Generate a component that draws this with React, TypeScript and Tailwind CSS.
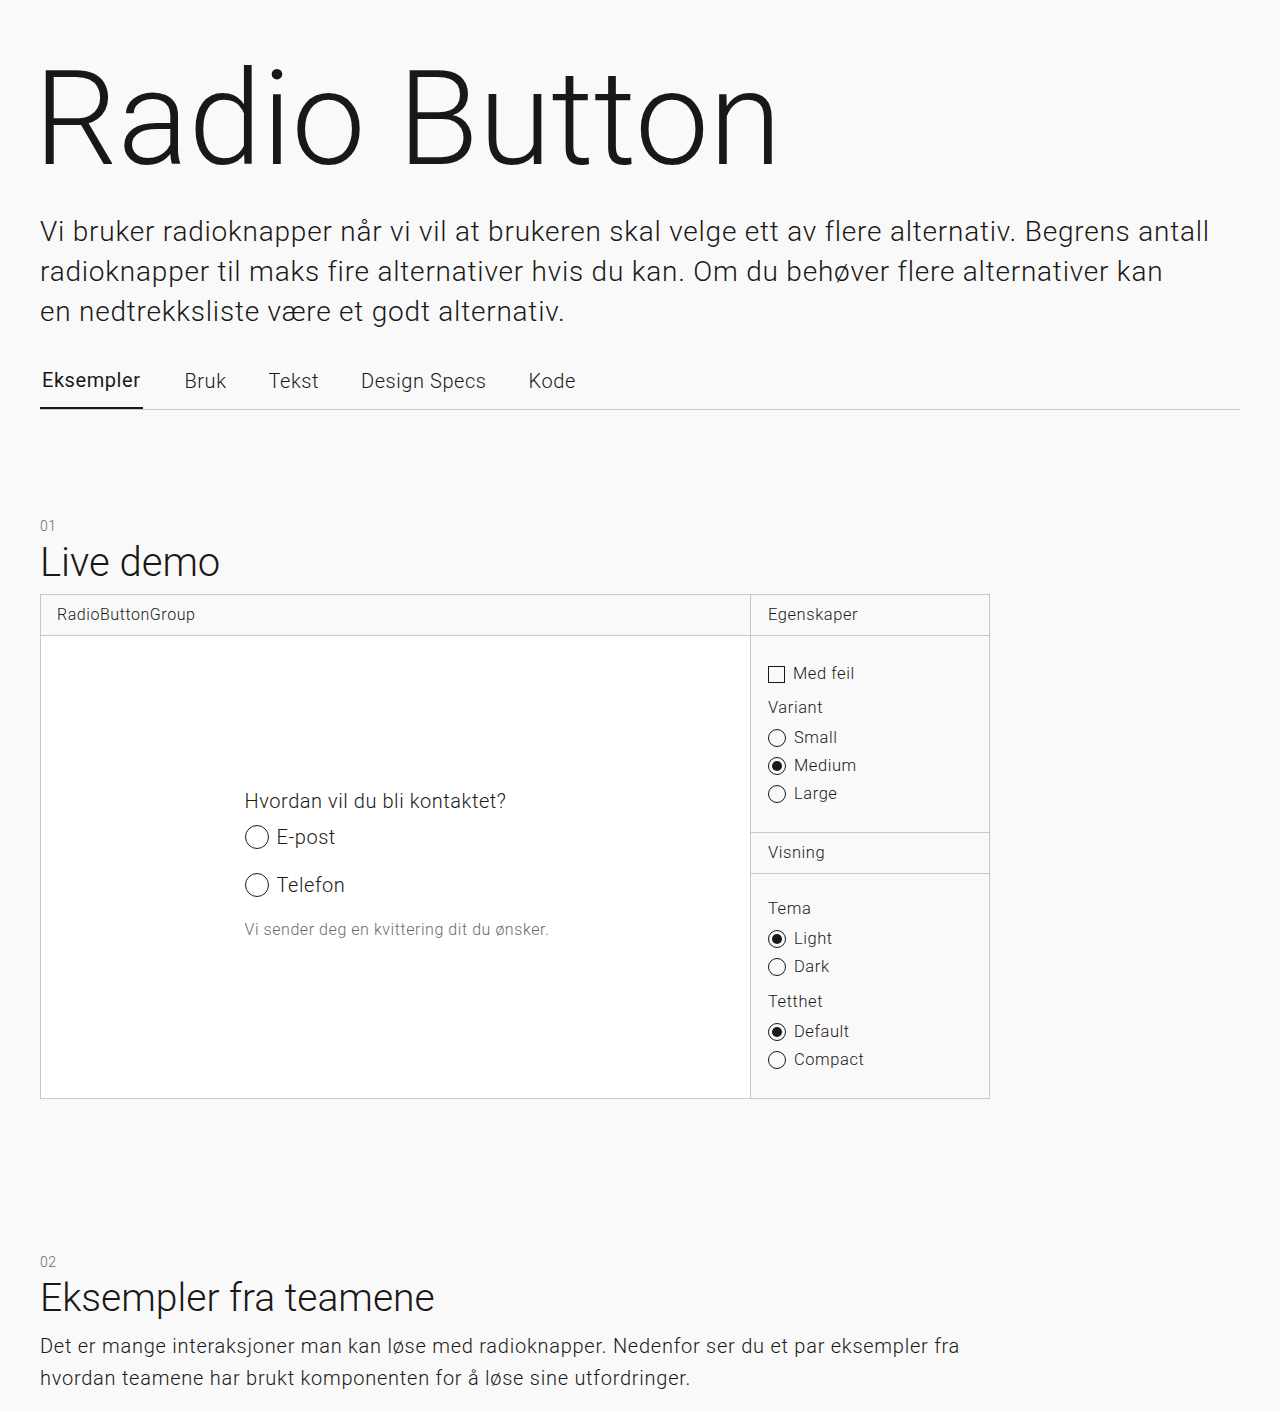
import React from 'react';

const font = { fontFamily: 'Roboto, "Noto Sans", sans-serif' };

const Radio = ({ checked, size = 'sm' }: { checked?: boolean; size?: 'sm' | 'lg' }) => {
  const box = size === 'lg' ? 'w-6 h-6' : 'w-[18px] h-[18px]';
  const dot = size === 'lg' ? 'w-3 h-3' : 'w-[10px] h-[10px]';
  return (
    <span className={`${box} rounded-full border border-[#1a1816] bg-transparent flex items-center justify-center shrink-0`}>
      {checked && <span className={`${dot} rounded-full bg-[#1a1816]`} />}
    </span>
  );
};

const Option = ({ label, checked }: { label: string; checked?: boolean }) => (
  <label className="flex items-center gap-2 h-7 text-[16.5px] text-[#1a1816]">
    <Radio checked={checked} />
    <span>{label}</span>
  </label>
);

const tabs = ['Eksempler', 'Bruk', 'Tekst', 'Design Specs', 'Kode'];

export default function App() {
  return (
    <div className="min-h-[1411px] bg-[#f9f9f9] text-[#1a1816] font-light tracking-[0.56px]" style={font}>
      <div className="px-10 pt-[44px]">
        <h1 className="text-[132px] leading-[150px] tracking-normal -ml-[6px] font-light">Radio Button</h1>

        <p className="mt-[18px] text-[28px] leading-[40px] tracking-[0.78px] whitespace-nowrap">
          Vi bruker radioknapper når vi vil at brukeren skal velge ett av flere alternativ. Begrens antall
          <br />
          radioknapper til maks fire alternativer hvis du kan. Om du behøver flere alternativer kan
          <br />
          en nedtrekksliste være et godt alternativ.
        </p>

        <nav className="mt-[29px] flex border-b border-[#c8c8c8]">
          {tabs.map((t, i) => (
            <div
              key={t}
              className={`h-[48px] pb-[8px] flex items-center text-[20px] mr-[42px] ${
                i === 0 ? 'border-b-2 border-[#1a1816] -mb-px px-[2px] font-normal' : ''
              }`}
            >
              {t}
            </div>
          ))}
        </nav>

        <section className="mt-[106px]">
          <div className="text-[14px] leading-[20px] text-[#6b6b6b]">01</div>
          <h2 className="pt-[3px] text-[40px] leading-[47px] tracking-normal">Live demo</h2>

          <div className="mt-[8px] w-[950px] h-[505px] border border-[#c8c8c8] flex">
            <div className="flex-1 flex flex-col border-r border-[#c8c8c8]">
              <div className="h-[41px] px-4 flex items-center text-[16px] border-b border-[#c8c8c8]">
                RadioButtonGroup
              </div>
              <div className="flex-1 bg-white flex items-center justify-center">
                <div className="w-[302px] -mt-[4px] whitespace-nowrap">
                  <div className="text-[20px] leading-[24px] mb-[6px]">Hvordan vil du bli kontaktet?</div>
                  <div className="flex items-center gap-2 h-[36px] text-[20px]">
                    <Radio size="lg" />
                    <span>E-post</span>
                  </div>
                  <div className="flex items-center gap-2 h-[36px] mt-[12px] text-[20px]">
                    <Radio size="lg" />
                    <span>Telefon</span>
                  </div>
                  <div className="mt-[15px] text-[16px] text-[#6b6b6b]">Vi sender deg en kvittering dit du ønsker.</div>
                </div>
              </div>
            </div>

            <div className="w-[238px] flex flex-col">
              <div className="h-[41px] px-[17px] flex items-center text-[16.5px] border-b border-[#c8c8c8]">Egenskaper</div>
              <div className="px-[17px] pt-[24px] pb-[24px]">
                <label className="flex items-center gap-2 h-7 text-[16.5px]">
                  <span className="w-[17px] h-[17px] border border-[#1a1816]" />
                  <span>Med feil</span>
                </label>
                <div className="mt-[8px] text-[16.5px] leading-[24px] mb-[4px]">Variant</div>
                <Option label="Small" />
                <Option label="Medium" checked />
                <Option label="Large" />
              </div>
              <div className="h-[42px] px-[17px] flex items-center text-[16.5px] border-y border-[#c8c8c8]">Visning</div>
              <div className="px-[17px] pt-[23px]">
                <div className="text-[16.5px] leading-[24px] mb-[4px]">Tema</div>
                <Option label="Light" checked />
                <Option label="Dark" />
                <div className="mt-[9px] text-[16.5px] leading-[24px] mb-[4px]">Tetthet</div>
                <Option label="Default" checked />
                <Option label="Compact" />
              </div>
            </div>
          </div>
        </section>

        <section className="mt-[153px]">
          <div className="text-[14px] leading-[20px] text-[#6b6b6b]">02</div>
          <h2 className="pt-[3px] text-[39px] leading-[47px] tracking-normal">Eksempler fra teamene</h2>
          <p className="mt-[8px] text-[20px] leading-[32px] tracking-[0.75px] whitespace-nowrap">
            Det er mange interaksjoner man kan løse med radioknapper. Nedenfor ser du et par eksempler fra
            <br />
            hvordan teamene har brukt komponenten for å løse sine utfordringer.
          </p>
        </section>
      </div>
    </div>
  );
}
